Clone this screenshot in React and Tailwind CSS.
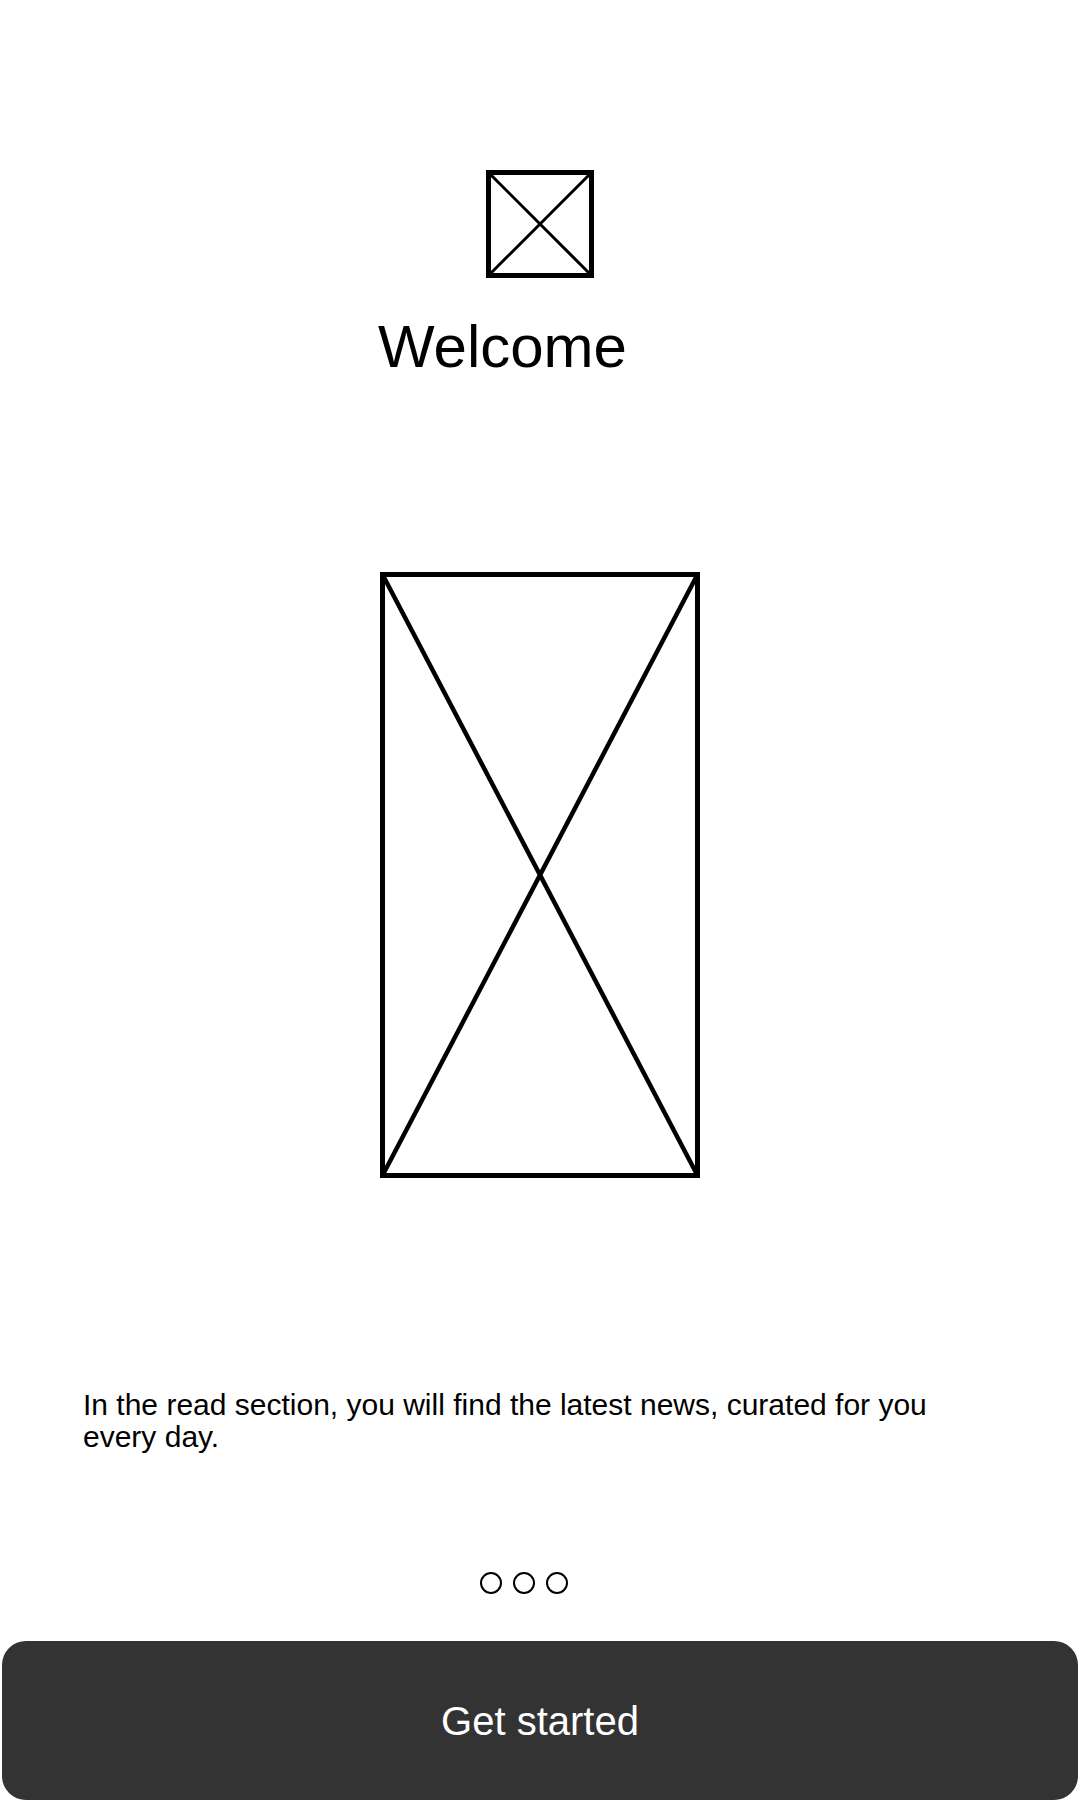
import React from "react";

// placeholder image box: frame with two diagonals
const Placeholder = ({ w, h, frame, cross, className }) => {
  const o = frame / 2;
  return (
    <svg width={w} height={h} viewBox={`0 0 ${w} ${h}`} className={className}>
      <line x1={o} y1={o} x2={w - o} y2={h - o} stroke="#000" strokeWidth={cross} />
      <line x1={w - o} y1={o} x2={o} y2={h - o} stroke="#000" strokeWidth={cross} />
      <rect x={o} y={o} width={w - frame} height={h - frame} fill="none" stroke="#000" strokeWidth={frame} />
    </svg>
  );
};

const Dots = () => (
  <div className="flex justify-center gap-[11px] pr-[33px]">
    {[0, 1, 2].map(i => (
      <span key={i} className="w-[22px] h-[22px] rounded-full border-[2.5px] border-black" />
    ))}
  </div>
);

export default function App() {
  return (
    <div className="w-[1080px] h-[1800px] bg-white flex flex-col pt-[170px] font-['Liberation_Sans',Arial,sans-serif] text-black">
      <Placeholder w={108} h={108} frame={5} cross={3} className="self-center" />
      <h1 className="self-center w-[320px] mt-[34px] -translate-x-[2px] text-[60px] leading-[69px] font-normal">Welcome</h1>

      <Placeholder w={320} h={606} frame={5} cross={4.5} className="self-center mt-[191px]" />

      <p className="mt-[211px] pl-[83px] pr-[110px] text-[30px] leading-[32px]">
        In the read section, you will find the latest news, curated for you every day.
      </p>

      <div className="mt-[119px]">
        <Dots />
      </div>

      <button className="mt-[47px] mx-[2px] h-[159px] rounded-[24px] bg-[#333333] text-white text-[40px] leading-none">
        Get started
      </button>
    </div>
  );
}
